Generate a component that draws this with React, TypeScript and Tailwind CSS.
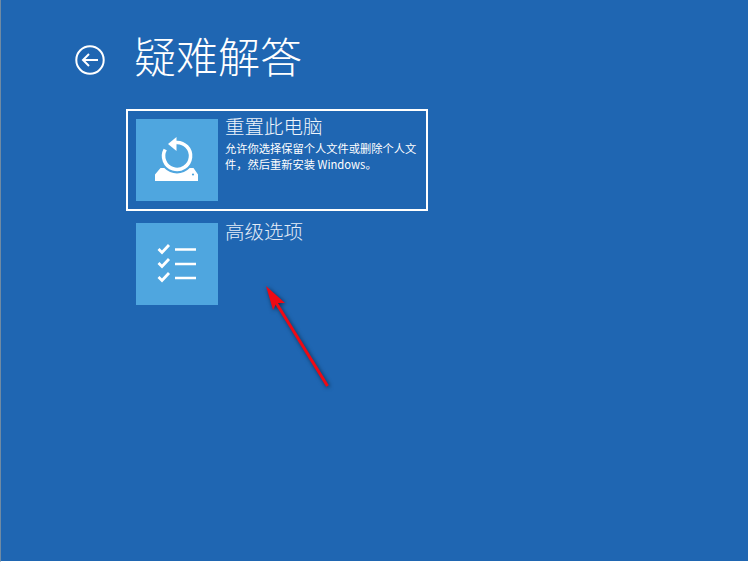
const font = "font-['Noto_Sans_CJK_SC','Liberation_Sans',sans-serif]"

function ResetIcon() {
  return (
    <svg width="82" height="82" viewBox="0 0 82 82" fill="none">
      <path d="M40 23.5 A13.5 13.5 0 1 1 29.2 30.5" stroke="white" strokeWidth="3.6" />
      <path d="M40.5 18 L32 25 L40.5 32 Z" fill="white" />
      <path d="M19 62 V55.5 L24.5 49 H28.3 A17.5 17.5 0 0 0 53.7 49 H57.5 L62 55.5 V62 Z" fill="white" />
      <circle cx="57" cy="55.5" r="1.1" fill="#4fa6df" />
    </svg>
  )
}

function ListIcon() {
  return (
    <svg width="82" height="82" viewBox="0 0 82 82" fill="none" stroke="white">
      <path d="M22.5 26 L26 29.5 L33 22" strokeWidth="2.8" />
      <path d="M22.5 40 L26 43.5 L33 36" strokeWidth="2.8" />
      <path d="M22.5 54 L26 57.5 L33 50" strokeWidth="2.8" />
      <path d="M39 26.5 H60 M39 41 H60 M39 55 H60" strokeWidth="2.6" />
    </svg>
  )
}

function Arrow() {
  return (
    <svg className="absolute left-[255px] top-[275px] drop-shadow-[1px_1px_2px_rgba(0,0,0,0.55)]" width="85" height="122" viewBox="255 275 85 122" fill="none">
      <path d="M326.5 386 L274 301" stroke="#ee0a14" strokeWidth="3" />
      <path d="M265 286 L284 303 L275.5 303 L272 310 Z" fill="#ee0a14" />
    </svg>
  )
}

export default function App() {
  return (
    <div className={`relative h-[562px] w-[748px] overflow-hidden border-l border-b border-l-[#6f8aa3] border-b-white bg-[#1f66b2] text-white ${font}`}>
      <div className="flex h-[109px] items-start pl-[74px] pt-[45px]">
        <svg width="30" height="30" viewBox="0 0 30 30" fill="none" stroke="white">
          <circle cx="15" cy="15" r="13.7" strokeWidth="2" />
          <path d="M23 15 H8 M14 9 L8 15 L14 21" strokeWidth="2" />
        </svg>
        <h1 className="ml-[29px] mt-[-19px] text-[42px] font-light leading-[58px]">疑难解答</h1>
      </div>

      <div className="ml-[125px] flex h-[102px] w-[302px] border-2 border-white p-[8px]">
        <div className="h-[82px] w-[82px] shrink-0 bg-[#4fa6df]">
          <ResetIcon />
        </div>
        <div className="ml-[7px] mt-[-6px]">
          <div className="text-[19.5px] font-light leading-[26px] text-[#eef4fb]">重置此电脑</div>
          <p className="mt-[1px] w-[193px] text-[11.25px] leading-[16px]">允许你选择保留个人文件或删除个人文件，然后重新安装 Windows。</p>
        </div>
      </div>

      <div className="ml-[135px] mt-[12px] flex">
        <div className="h-[82px] w-[82px] shrink-0 bg-[#4fa6df]">
          <ListIcon />
        </div>
        <div className="ml-[7px] mt-[-5px] text-[19.5px] font-light leading-[26px] text-[#e3ecf7]">高级选项</div>
      </div>

      <Arrow />
    </div>
  )
}
